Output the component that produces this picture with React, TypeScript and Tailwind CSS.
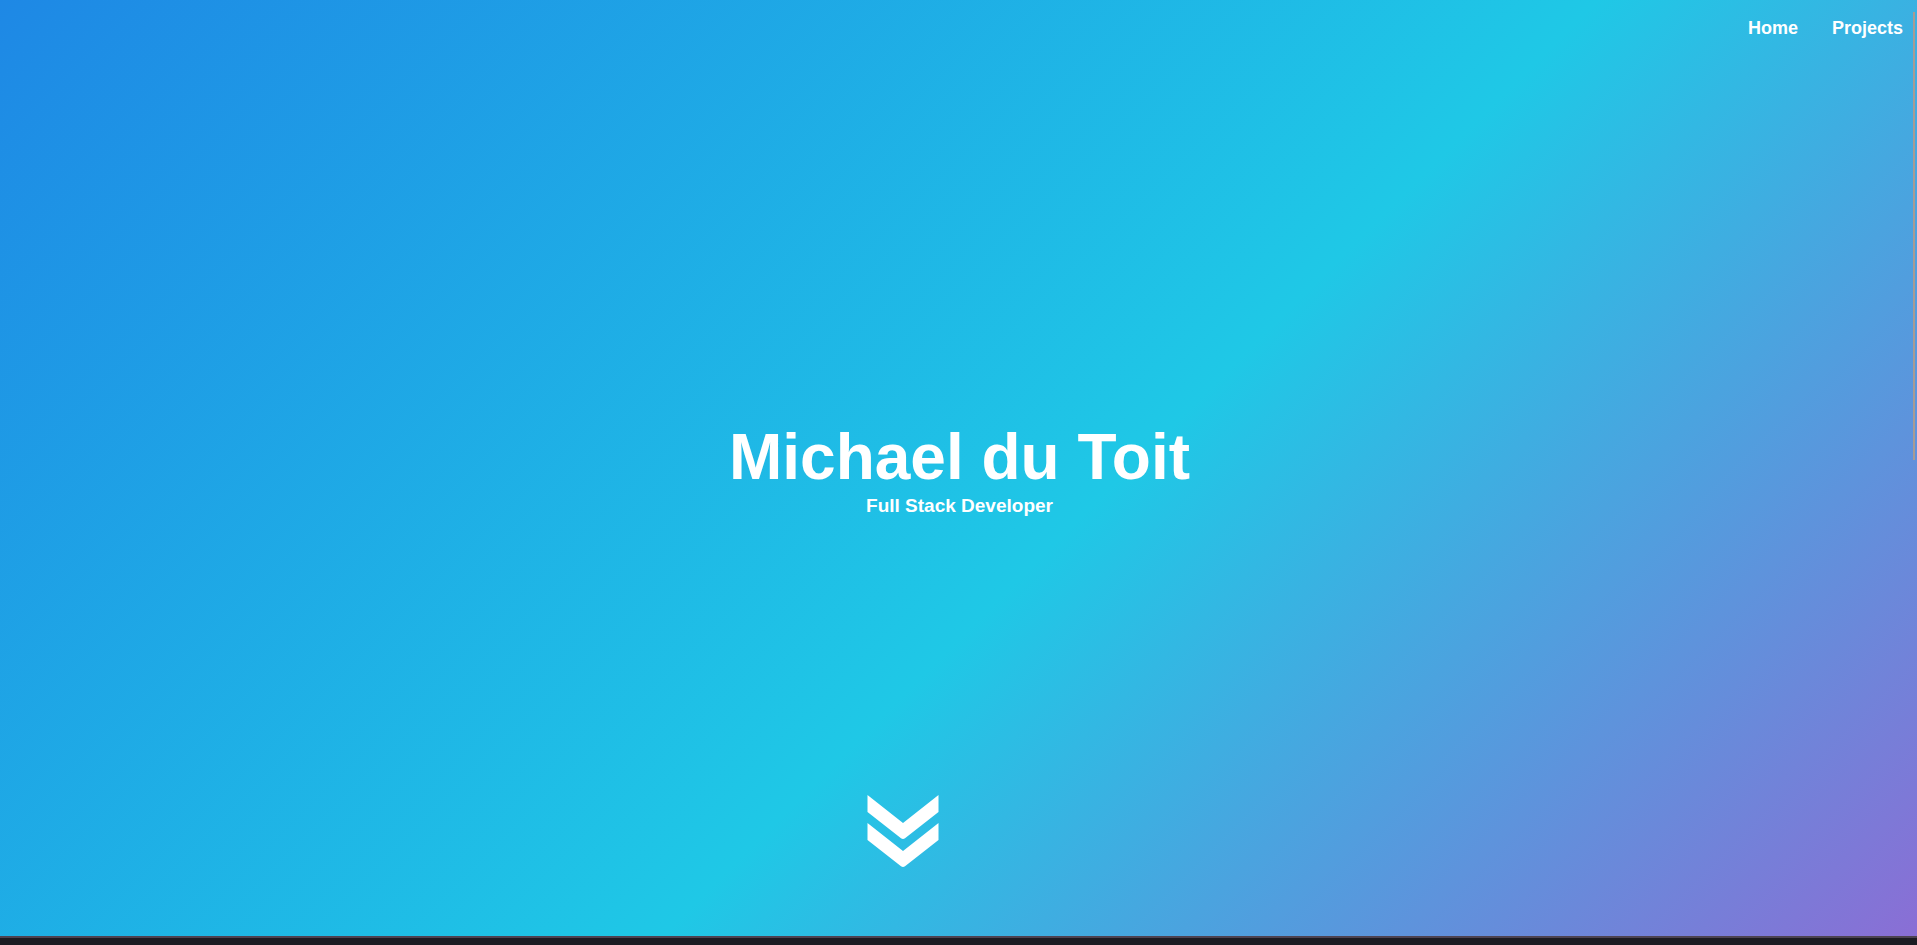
const links = [
  { label: "Home", href: "#home" },
  { label: "Projects", href: "#projects" },
];

function ChevronsDown() {
  return (
    <svg viewBox="0 0 72 72" className="h-18 w-18" fill="#fff" aria-hidden="true">
      <path d="M.5 0 36 28 71.500 0V17L38 43.200Q36 44.600 34 43.200L.5 17Z" />
      <path d="M.5 28 36 56 71.500 28V45L38 71.200Q36 72.600 34 71.200L.5 45Z" />
    </svg>
  );
}

export default function App() {
  return (
    <div className="relative flex h-screen flex-col overflow-hidden bg-[#1c1b22] font-['Liberation_Sans',Arial,sans-serif] font-bold text-white">
      <section
        id="home"
        className="grid flex-1 grid-rows-[1fr_auto_1fr] bg-[linear-gradient(135deg,#1e88e5_0%,#1fc8e6_56%,#8a6ed5_100%)]"
      >
        <nav className="flex items-start justify-end gap-[34px] px-3.5 py-3.5">
          {links.map((link) => (
            <a key={link.label} href={link.href} className="text-lg leading-7">
              {link.label}
            </a>
          ))}
        </nav>
        <header className="pt-0.5 pl-0.5 text-center">
          <h1 className="text-[64px] leading-[74px]">Michael du Toit</h1>
          <p className="text-[19px] leading-6">Full Stack Developer</p>
        </header>
        <div className="flex items-end justify-center pr-28 pb-[69px]">
          <a href="#projects" aria-label="Scroll to projects">
            <ChevronsDown />
          </a>
        </div>
      </section>
      <div id="projects" className="h-[9px] shrink-0 border-t-2 border-[#4d4352]" />
      <div className="absolute top-3 right-0.5 h-112 w-0.5 bg-[#a89b93]" />
    </div>
  );
}
